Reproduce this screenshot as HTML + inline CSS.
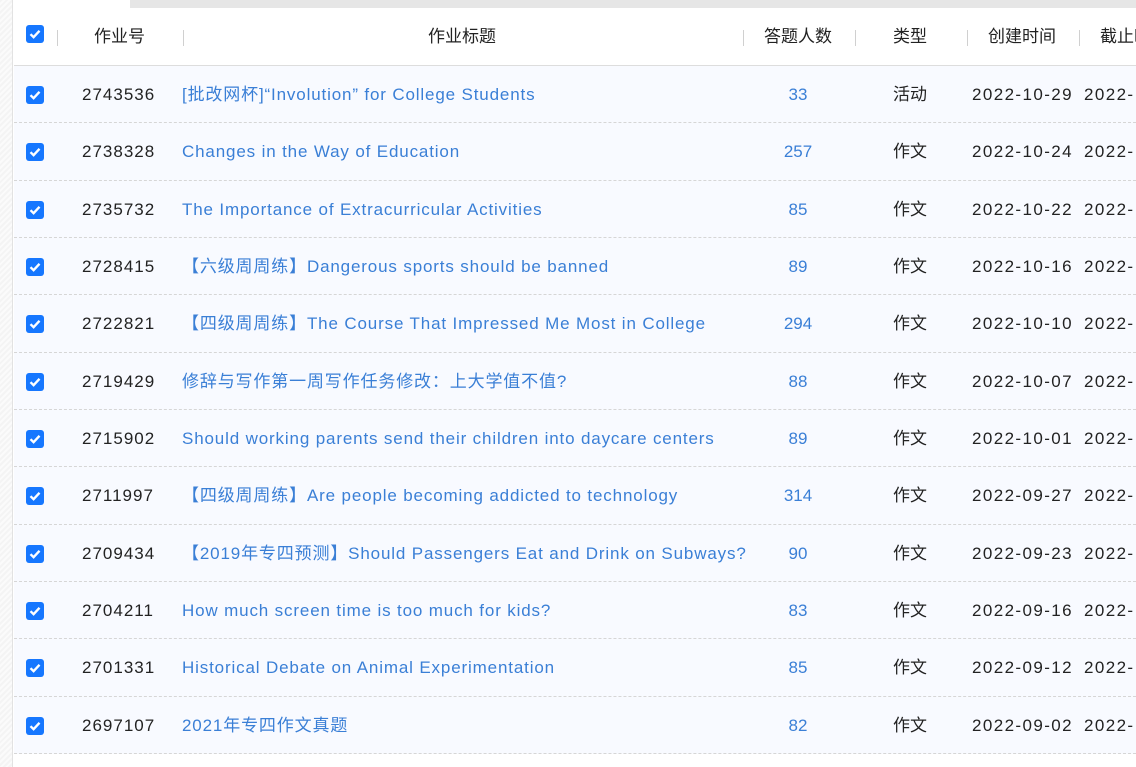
<!DOCTYPE html>
<html><head><meta charset="utf-8"><style>
*{margin:0;padding:0;box-sizing:border-box}
body{width:1136px;height:767px;overflow:hidden;background:#fff;font-family:"Liberation Sans","Noto Sans CJK SC",sans-serif;font-size:17px;color:#222;position:relative}
.side{position:absolute;left:0;top:0;width:13px;height:767px;background:repeating-linear-gradient(135deg,#f4f4f4 0 2px,#fbfbfb 2px 4px);border-right:1px solid #e2e2e2}
.topbar{position:absolute;left:130px;top:0;right:0;height:8px;background:#e6e6e6}
.hdr{position:absolute;left:14px;top:8px;right:0;height:58px;border-bottom:1px solid #ddd;background:#fff}
.row{position:absolute;left:14px;right:0;height:57.33px;background:#f8faff;border-bottom:1px dashed #d6d6d6}
.c{position:absolute;top:0;line-height:57px;white-space:nowrap}
.num{letter-spacing:1px}
.dt{letter-spacing:1.4px}
.blue{color:#3a7fd6}
.t{letter-spacing:.85px}
.sep{position:absolute;top:22px;width:1px;height:16px;background:#d0d0d0}
.cb{position:absolute;left:12px;top:20px;width:18px;height:18px;background:#1677ff;border-radius:3px}
.cb svg{position:absolute;left:2px;top:2px}
</style></head><body>
<div class="side"></div><div class="topbar"></div>
<div class="hdr">
<div class="cb" style="top:17px"><svg width="14" height="14" viewBox="0 0 14 14"><path d="M2.5 7.2 L5.6 10.2 L11.5 3.8" stroke="#fff" stroke-width="2.4" fill="none"/></svg></div>
<div class="sep" style="left:43px"></div>
<div class="c" style="left:80px;width:50px;text-align:center">作业号</div>
<div class="sep" style="left:169px"></div>
<div class="c" style="left:398px;width:100px;text-align:center">作业标题</div>
<div class="sep" style="left:729px"></div>
<div class="c" style="left:744px;width:80px;text-align:center">答题人数</div>
<div class="sep" style="left:841px"></div>
<div class="c" style="left:866px;width:60px;text-align:center">类型</div>
<div class="sep" style="left:953px"></div>
<div class="c" style="left:968px;width:80px;text-align:center">创建时间</div>
<div class="sep" style="left:1065px"></div>
<div class="c" style="left:1086px">截止时间</div>
</div>
<div id="rows"></div>
<script>
var d=[["2743536","[批改网杯]“Involution” for College Students","33","活动","2022-10-29"],
["2738328","Changes in the Way of Education","257","作文","2022-10-24"],
["2735732","The Importance of Extracurricular Activities","85","作文","2022-10-22"],
["2728415","【六级周周练】Dangerous sports should be banned","89","作文","2022-10-16"],
["2722821","【四级周周练】The Course That Impressed Me Most in College","294","作文","2022-10-10"],
["2719429","修辞与写作第一周写作任务修改：上大学值不值?","88","作文","2022-10-07"],
["2715902","Should working parents send their children into daycare centers","89","作文","2022-10-01"],
["2711997","【四级周周练】Are people becoming addicted to technology","314","作文","2022-09-27"],
["2709434","【2019年专四预测】Should Passengers Eat and Drink on Subways?","90","作文","2022-09-23"],
["2704211","How much screen time is too much for kids?","83","作文","2022-09-16"],
["2701331","Historical Debate on Animal Experimentation","85","作文","2022-09-12"],
["2697107","2021年专四作文真题","82","作文","2022-09-02"]];
var h="";
d.forEach(function(r,i){var top=66+i*57.33;
h+='<div class="row" style="top:'+top+'px"><div class="cb"><svg width="14" height="14" viewBox="0 0 14 14"><path d="M2.5 7.2 L5.6 10.2 L11.5 3.8" stroke="#fff" stroke-width="2.4" fill="none"/></svg></div>'+
'<div class="c num" style="left:68px">'+r[0]+'</div>'+
'<div class="c blue t" style="left:168px">'+r[1]+'</div>'+
'<div class="c blue" style="left:744px;width:80px;text-align:center">'+r[2]+'</div>'+
'<div class="c" style="left:866px;width:60px;text-align:center">'+r[3]+'</div>'+
'<div class="c dt" style="left:958px">'+r[4]+'</div>'+
'<div class="c dt" style="left:1070px">2022-&nbsp;'+(i<8?'':'0')+'</div></div>';});
document.getElementById("rows").innerHTML=h;
</script>
</body></html>
